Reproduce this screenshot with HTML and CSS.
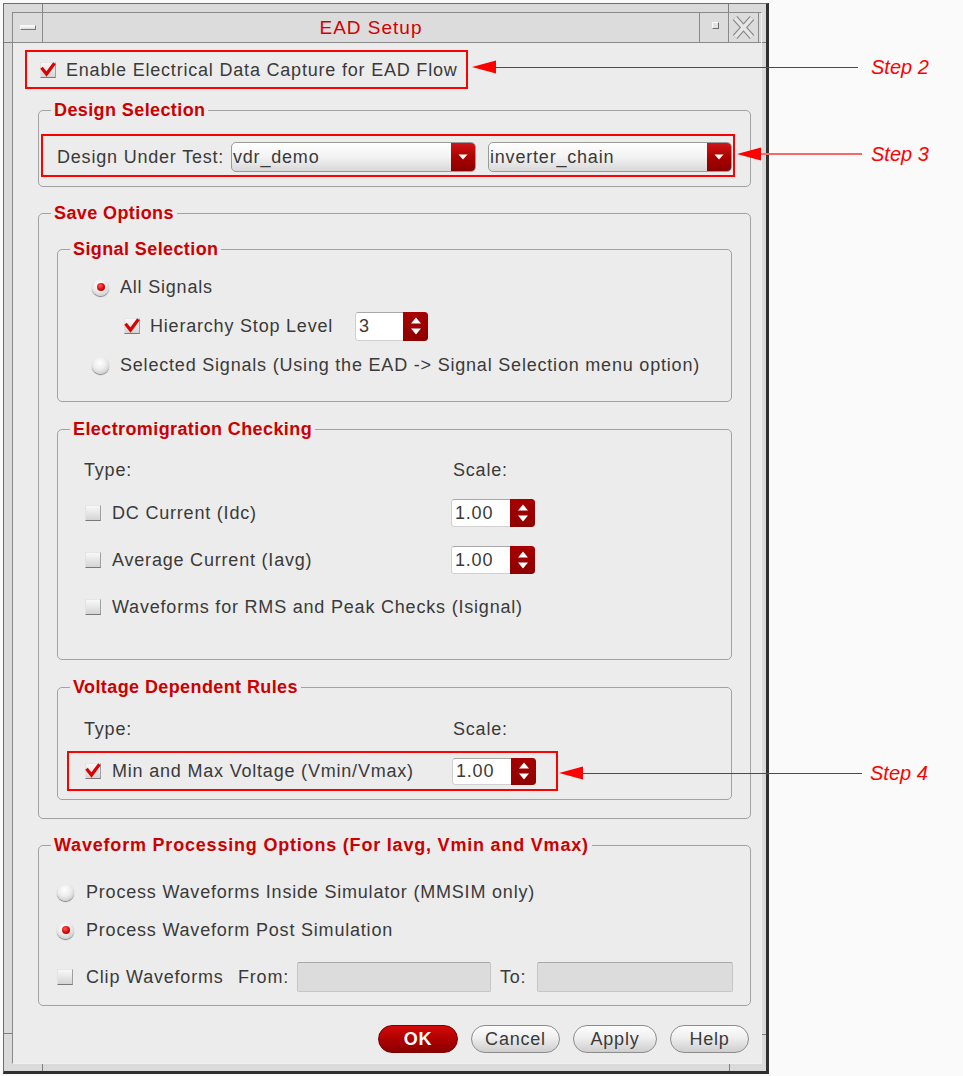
FILE: index.html
```html
<!DOCTYPE html>
<html lang="en">
<head>
<meta charset="utf-8">
<title>EAD Setup</title>
<link rel="stylesheet" href="styles.css">
</head>
<body>
<div class="stage">
  <div class="window">
    <span class="handle h-tl-v"></span>
    <span class="handle h-tl-h"></span>
    <span class="handle h-tr-v"></span>
    <span class="handle h-tr-h"></span>
    <span class="handle h-bl-h"></span>
    <span class="handle h-bl-v"></span>
    <span class="handle h-br-v"></span>
    <span class="handle h-br-h"></span>
    <div class="panel">
      <div class="titlebar">
        <div class="tb-btn tb-menu"><span class="tb-dash"></span></div>
        <div class="tb-title">EAD Setup</div>
        <div class="tb-btn tb-max"><span class="tb-square"></span></div>
        <div class="tb-btn tb-close">
          <svg width="29" height="29" viewBox="0 0 29 29">
            <path d="M6 5 L23 24 M23 5 L6 24" stroke="#8a8a8a" stroke-width="6" fill="none"/>
            <path d="M6 5 L23 24 M23 5 L6 24" stroke="#e6e6e6" stroke-width="3.6" fill="none"/>
          </svg>
        </div>
      </div>

      <div class="content">
        <div class="hl enable-box">
          <span class="cb"><svg class="tick" viewBox="0 0 16 16"><path d="M2.5 7 L6.5 12 L13.5 2.5"/></svg></span>
          <span class="lbl">Enable Electrical Data Capture for EAD Flow</span>
        </div>

        <fieldset class="group g-design">
          <legend>Design Selection</legend>
          <div class="gbody design-body">
            <div class="hl dut-row">
              <span class="lbl dut-label">Design Under Test:</span>
              <div class="combo combo-lib">
                <span class="combo-text">vdr_demo</span>
                <span class="combo-btn"><svg width="12" height="8" viewBox="0 0 12 8"><path d="M1.5 1.5 H10.5 L6 6.5 Z" fill="#fff"/></svg></span>
              </div>
              <div class="combo combo-cell">
                <span class="combo-text">inverter_chain</span>
                <span class="combo-btn"><svg width="12" height="8" viewBox="0 0 12 8"><path d="M1.5 1.5 H10.5 L6 6.5 Z" fill="#fff"/></svg></span>
              </div>
            </div>
          </div>
        </fieldset>

        <fieldset class="group g-save">
          <legend>Save Options</legend>
          <div class="gbody save-body">

            <fieldset class="group sub g-signal">
              <legend>Signal Selection</legend>
              <div class="gbody signal-body">
                <div class="row sig-row">
                  <span class="radio on"></span>
                  <span class="lbl">All Signals</span>
                </div>
                <div class="row sig-row hier-row">
                  <span class="cb"><svg class="tick" viewBox="0 0 16 16"><path d="M2.5 7 L6.5 12 L13.5 2.5"/></svg></span>
                  <span class="lbl hier-label">Hierarchy Stop Level</span>
                  <div class="spin spin-hier">
                    <span class="spin-field">3</span>
                    <span class="spin-btn"><svg width="14" height="22" viewBox="0 0 14 22"><path d="M7 2.5 L12 8.5 H2 Z M2 13.5 H12 L7 19.5 Z" fill="#fff"/></svg></span>
                  </div>
                </div>
                <div class="row sig-row">
                  <span class="radio"></span>
                  <span class="lbl">Selected Signals (Using the EAD -&gt; Signal Selection menu option)</span>
                </div>
              </div>
            </fieldset>

            <fieldset class="group sub g-em">
              <legend>Electromigration Checking</legend>
              <div class="gbody em-body">
                <span class="lbl">Type:</span>
                <span class="lbl scale-lbl">Scale:</span>

                <div class="row check-item">
                  <span class="cb off"></span>
                  <span class="lbl">DC Current (Idc)</span>
                </div>
                <div class="spin spin-em">
                  <span class="spin-field">1.00</span>
                  <span class="spin-btn"><svg width="14" height="22" viewBox="0 0 14 22"><path d="M7 2.5 L12 8.5 H2 Z M2 13.5 H12 L7 19.5 Z" fill="#fff"/></svg></span>
                </div>

                <div class="row check-item">
                  <span class="cb off"></span>
                  <span class="lbl">Average Current (Iavg)</span>
                </div>
                <div class="spin spin-em">
                  <span class="spin-field">1.00</span>
                  <span class="spin-btn"><svg width="14" height="22" viewBox="0 0 14 22"><path d="M7 2.5 L12 8.5 H2 Z M2 13.5 H12 L7 19.5 Z" fill="#fff"/></svg></span>
                </div>

                <div class="row check-item span2">
                  <span class="cb off"></span>
                  <span class="lbl">Waveforms for RMS and Peak Checks (Isignal)</span>
                </div>
              </div>
            </fieldset>

            <fieldset class="group sub g-volt">
              <legend>Voltage Dependent Rules</legend>
              <div class="gbody volt-body">
                <div class="type-row">
                  <span class="lbl">Type:</span>
                  <span class="lbl scale-lbl">Scale:</span>
                </div>
                <div class="hl volt-row">
                  <span class="cb"><svg class="tick" viewBox="0 0 16 16"><path d="M2.5 7 L6.5 12 L13.5 2.5"/></svg></span>
                  <span class="lbl volt-label">Min and Max Voltage (Vmin/Vmax)</span>
                  <div class="spin spin-volt">
                    <span class="spin-field">1.00</span>
                    <span class="spin-btn"><svg width="14" height="22" viewBox="0 0 14 22"><path d="M7 2.5 L12 8.5 H2 Z M2 13.5 H12 L7 19.5 Z" fill="#fff"/></svg></span>
                  </div>
                </div>
              </div>
            </fieldset>

          </div>
        </fieldset>

        <fieldset class="group g-wave">
          <legend>Waveform Processing Options (For Iavg, Vmin and Vmax)</legend>
          <div class="gbody wave-body">
            <div class="row wave-row">
              <span class="radio"></span>
              <span class="lbl">Process Waveforms Inside Simulator (MMSIM only)</span>
            </div>
            <div class="row wave-row">
              <span class="radio on"></span>
              <span class="lbl">Process Waveform Post Simulation</span>
            </div>
            <div class="row clip-row">
              <div class="clip-check">
                <span class="cb off"></span>
                <span class="lbl">Clip Waveforms</span>
              </div>
              <span class="lbl from-lbl">From:</span>
              <span class="field field-from"></span>
              <span class="lbl to-lbl">To:</span>
              <span class="field field-to"></span>
            </div>
          </div>
        </fieldset>

        <div class="btns">
          <button class="btn btn-ok">OK</button>
          <button class="btn btn-cancel">Cancel</button>
          <button class="btn btn-apply">Apply</button>
          <button class="btn btn-help">Help</button>
        </div>
      </div>
    </div>
  </div>

  <div class="anno anno-2">
    <svg width="24" height="14" viewBox="0 0 24 14"><path d="M0 7 L24 0.5 V13.5 Z" fill="#ff0000"/></svg>
    <span class="ln ln-2"></span>
    <span class="step step-2">Step 2</span>
  </div>
  <div class="anno anno-3">
    <svg width="24" height="14" viewBox="0 0 24 14"><path d="M0 7 L24 0.5 V13.5 Z" fill="#ff0000"/></svg>
    <span class="ln ln-3"></span>
    <span class="step step-3">Step 3</span>
  </div>
  <div class="anno anno-4">
    <svg width="24" height="14" viewBox="0 0 24 14"><path d="M0 7 L24 0.5 V13.5 Z" fill="#ff0000"/></svg>
    <span class="ln ln-4"></span>
    <span class="step step-4">Step 4</span>
  </div>
</div>
</body>
</html>
```

FILE: styles.css
```css
* { box-sizing: border-box; }

body {
  margin: 0;
  background: #fafafa;
  font-family: "Liberation Sans", Arial, Helvetica, sans-serif;
  color: #3a3a3a;
}

.stage {
  position: relative;
  width: 963px;
  height: 1076px;
  overflow: hidden;
}

/* ---------- window frame ---------- */
.window {
  position: relative;
  margin: 3px 0 0 3px;
  width: 766px;
  height: 1071px;
  border-style: solid;
  border-width: 1px 3px 3px 1px;
  border-color: #6e6e6e #303030 #303030 #6e6e6e;
  padding: 8px 4px 7px 8px;
  background: #dadada;
}

.handle {
  position: absolute;
  background: #808080;
}
.h-tl-v { left: 38px; top: 0; width: 1px; height: 8px; }
.h-tl-h { left: 0; top: 38px; width: 8px; height: 1px; }
.h-tr-v { left: 724px; top: 0; width: 1px; height: 8px; }
.h-tr-h { left: 758px; top: 38px; width: 4px; height: 1px; }
.h-bl-h { left: 0; top: 1029px; width: 8px; height: 1px; }
.h-bl-v { left: 38px; top: 1060px; width: 1px; height: 7px; }
.h-br-v { left: 725px; top: 1060px; width: 1px; height: 7px; }
.h-br-h { left: 758px; top: 1030px; width: 4px; height: 1px; }

.panel {
  height: 100%;
  display: flex;
  flex-direction: column;
  border: 1px solid #8a8a8a;
  border-right-color: #f0f0f0;
  border-bottom-color: #f0f0f0;
  background: #ececec;
}

/* ---------- title bar ---------- */
.titlebar {
  display: flex;
  height: 30px;
  flex: none;
  border-bottom: 1px solid #8a8a8a;
  background: #dcdcdc;
  padding-right: 2px;
}
.tb-btn {
  display: flex;
  align-items: center;
  justify-content: center;
  flex: none;
}
.tb-menu { width: 30px; border-right: 1px solid #8a8a8a; }
.tb-dash {
  width: 16px;
  height: 5px;
  background: linear-gradient(#fbfbfb, #dcdcdc);
  border: 1px solid;
  border-color: #f8f8f8 #777 #777 #f8f8f8;
}
.tb-title {
  flex: 1;
  text-align: center;
  color: #d40000;
  font-size: 19px;
  letter-spacing: 1px;
  line-height: 29px;
}
.tb-max { width: 29px; border-left: 1px solid #8a8a8a; }
.tb-square {
  width: 7px;
  height: 7px;
  border: 1px solid;
  border-color: #fafafa #6e6e6e #6e6e6e #fafafa;
  background: #e2e2e2;
  margin: -4px 0 0 2px;
}
.tb-close {
  width: 31px;
  border-left: 1px solid #8a8a8a;
  border-right: 1px solid #8a8a8a;
}

/* ---------- content ---------- */
.content {
  flex: 1;
  display: flex;
  flex-direction: column;
  padding: 7px 10px 10px 12px;
}

.lbl {
  font-size: 18px;
  letter-spacing: 0.8px;
  line-height: 20px;
  white-space: nowrap;
}

.hl { border: 2px solid #ff0000; }

.row { display: flex; align-items: center; }

.enable-box {
  align-self: flex-start;
  display: flex;
  align-items: center;
  gap: 10px;
  height: 39px;
  padding: 0 8px 0 13px;
}

/* ---------- group boxes ---------- */
fieldset.group {
  margin: 0 0 0 13px;
  padding: 0;
  border: 1px solid #a2a2a2;
  border-radius: 5px;
  min-width: 0;
}
fieldset.sub { margin-left: 0; }

.group > legend {
  margin-left: 12px;
  padding: 0 3px;
  font-size: 18px;
  font-weight: bold;
  line-height: 20px;
  color: #cc0000;
  letter-spacing: 0.4px;
  white-space: nowrap;
}

fieldset.g-design { margin-top: 11px; }
.design-body { padding: 14px 15px 9px 2px; }

.dut-row {
  display: flex;
  align-items: center;
  height: 43px;
  padding: 6px 1px 3px 14px;
}
.dut-label { flex: 1; }

.combo {
  display: flex;
  height: 30px;
  flex: none;
  border: 1px solid #9a9a9a;
  border-radius: 5px;
  background: linear-gradient(#ffffff, #f3f3f3 50%, #d8d8d8);
  overflow: hidden;
}
.combo-lib { width: 245px; margin-right: 12px; }
.combo-cell { width: 244px; }
.combo-text {
  flex: 1;
  padding-left: 1px;
  font-size: 18px;
  letter-spacing: 0.8px;
  line-height: 28px;
  white-space: nowrap;
}
.combo-btn {
  width: 24px;
  display: flex;
  align-items: center;
  justify-content: center;
  background: linear-gradient(#d01616, #a80000 55%, #8a0000);
}

fieldset.g-save { margin-top: 16px; }
.save-body { padding: 16px 18px 18px 18px; }

/* signal selection */
.signal-body {
  display: flex;
  flex-direction: column;
  gap: 9px;
  padding: 13px 0 21px 34px;
}
.sig-row { height: 30px; }
.hier-row { padding-left: 32px; }
.hier-row .cb { margin-right: 10px; }
.hier-label { width: 205px; }

/* checkbox */
.cb {
  width: 16px;
  height: 16px;
  flex: none;
  background: linear-gradient(#f8f8f8, #d4d4d4);
  border: 1px solid;
  border-color: #e6e6e6 #a0a0a0 #787878 #e2e2e2;
}
.tick {
  display: block;
  width: 16px;
  height: 16px;
  margin: -1px 0 0 -1px;
  overflow: visible;
}
.tick path {
  fill: none;
  stroke: #dd0000;
  stroke-width: 3.2;
  stroke-linecap: square;
  stroke-linejoin: miter;
}

/* radio */
.radio {
  width: 17px;
  height: 17px;
  flex: none;
  border-radius: 50%;
  margin-right: 11px;
  background: radial-gradient(circle at 45% 35%, #ffffff 0%, #ececec 45%, #b8b8b8 100%);
  box-shadow: 0 1px 1px #7a7a7a;
  display: flex;
  align-items: center;
  justify-content: center;
}
.radio.on::after {
  content: "";
  width: 8px;
  height: 8px;
  border-radius: 50%;
  background: radial-gradient(circle at 40% 35%, #ff6060, #dd0000 55%, #a00000);
}

/* spin box */
.spin {
  display: flex;
  flex: none;
  border-radius: 3px;
  overflow: hidden;
}
.spin-hier { width: 73px; height: 29px; }
.spin-em { width: 84px; height: 28px; }
.spin-volt { width: 84px; height: 27px; }
.spin-field {
  flex: 1;
  display: flex;
  align-items: center;
  padding-left: 3px;
  background: #ffffff;
  border: 1px solid #d0d0d0;
  border-top-color: #a8a8a8;
  border-right: none;
  border-radius: 3px 0 0 3px;
  font-size: 18px;
  letter-spacing: 0.8px;
}
.spin-btn {
  width: 25px;
  flex: none;
  display: flex;
  align-items: center;
  justify-content: center;
  background: linear-gradient(#a80000, #8e0000);
  border-radius: 0 3px 3px 0;
}

/* electromigration */
fieldset.g-em { margin-top: 17px; }
.em-body {
  display: grid;
  grid-template-columns: 367px auto;
  grid-template-rows: 20px 28px 28px 28px;
  row-gap: 19px;
  align-items: center;
  padding: 21px 0 38px 26px;
}
.scale-lbl { padding-left: 2px; }
.check-item .cb { margin-right: 11px; margin-left: 1px; }
.span2 { grid-column: 1 / 3; }

/* voltage */
fieldset.g-volt { margin-top: 17px; }
.volt-body { padding: 22px 0 8px 9px; }
.type-row {
  display: grid;
  grid-template-columns: 367px auto;
  height: 20px;
  margin-left: 17px;
}
.volt-row {
  display: flex;
  align-items: center;
  width: 491px;
  height: 40px;
  margin-top: 12px;
  padding-left: 16px;
}
.volt-row .cb { margin-right: 11px; }
.volt-label { width: 340px; }

/* waveform processing */
fieldset.g-wave { margin-top: 16px; }
.g-wave > legend { letter-spacing: 0.8px; }
.wave-body {
  display: flex;
  flex-direction: column;
  padding: 27px 16px 13px 18px;
}
.wave-row { height: 20px; }
.wave-row + .wave-row { margin-top: 18px; }
.wave-row .radio { margin-right: 12px; }
.clip-row { height: 30px; margin-top: 22px; }
.clip-check {
  width: 181px;
  display: flex;
  align-items: center;
  gap: 13px;
}
.from-lbl { width: 59px; }
.to-lbl { width: 37px; }
.field {
  height: 30px;
  flex: none;
  background: #dcdcdc;
  border: 1px solid #c6c6c6;
  border-top-color: #a9a9a9;
  border-radius: 2px;
}
.field-from { width: 194px; margin-right: 9px; }
.field-to { width: 196px; }

/* ---------- buttons ---------- */
.btns {
  margin-top: 19px;
  display: flex;
  justify-content: flex-end;
  gap: 13px;
  padding-right: 2px;
}
.btn {
  height: 28px;
  margin: 0;
  padding: 0;
  border-radius: 14px;
  border: 1px solid #8c8c8c;
  background: linear-gradient(#fdfdfd, #efefef 45%, #cecece);
  font-family: "Liberation Sans", Arial, Helvetica, sans-serif;
  font-size: 18px;
  letter-spacing: 0.8px;
  color: #3a3a3a;
  line-height: 26px;
}
.btn-ok {
  width: 80px;
  background: linear-gradient(#d40a0a, #b00000 50%, #8a0000);
  border-color: #780000;
  color: #ffffff;
  font-weight: bold;
}
.btn-cancel { width: 89px; }
.btn-apply { width: 84px; }
.btn-help { width: 79px; }

/* ---------- annotations ---------- */
.anno {
  position: absolute;
  display: flex;
  align-items: center;
  height: 20px;
  color: #ff0000;
}
.anno svg { display: block; flex: none; }
.ln { height: 1px; background: #ff0000; flex: none; }
.step {
  font-style: italic;
  font-size: 20px;
  line-height: 20px;
  white-space: nowrap;
}
.anno-2 { left: 472px; top: 57px; }
.ln-2 { width: 362px; }
.step-2 { margin-left: 13px; }

.anno-3 { left: 737px; top: 144px; }
.ln-3 { width: 101px; height: 2px; background: #f26a6a; }
.step-3 { margin-left: 9px; }

.anno-4 { left: 559px; top: 763px; }
.ln-4 { width: 279px; }
.step-4 { margin-left: 8px; }
```
